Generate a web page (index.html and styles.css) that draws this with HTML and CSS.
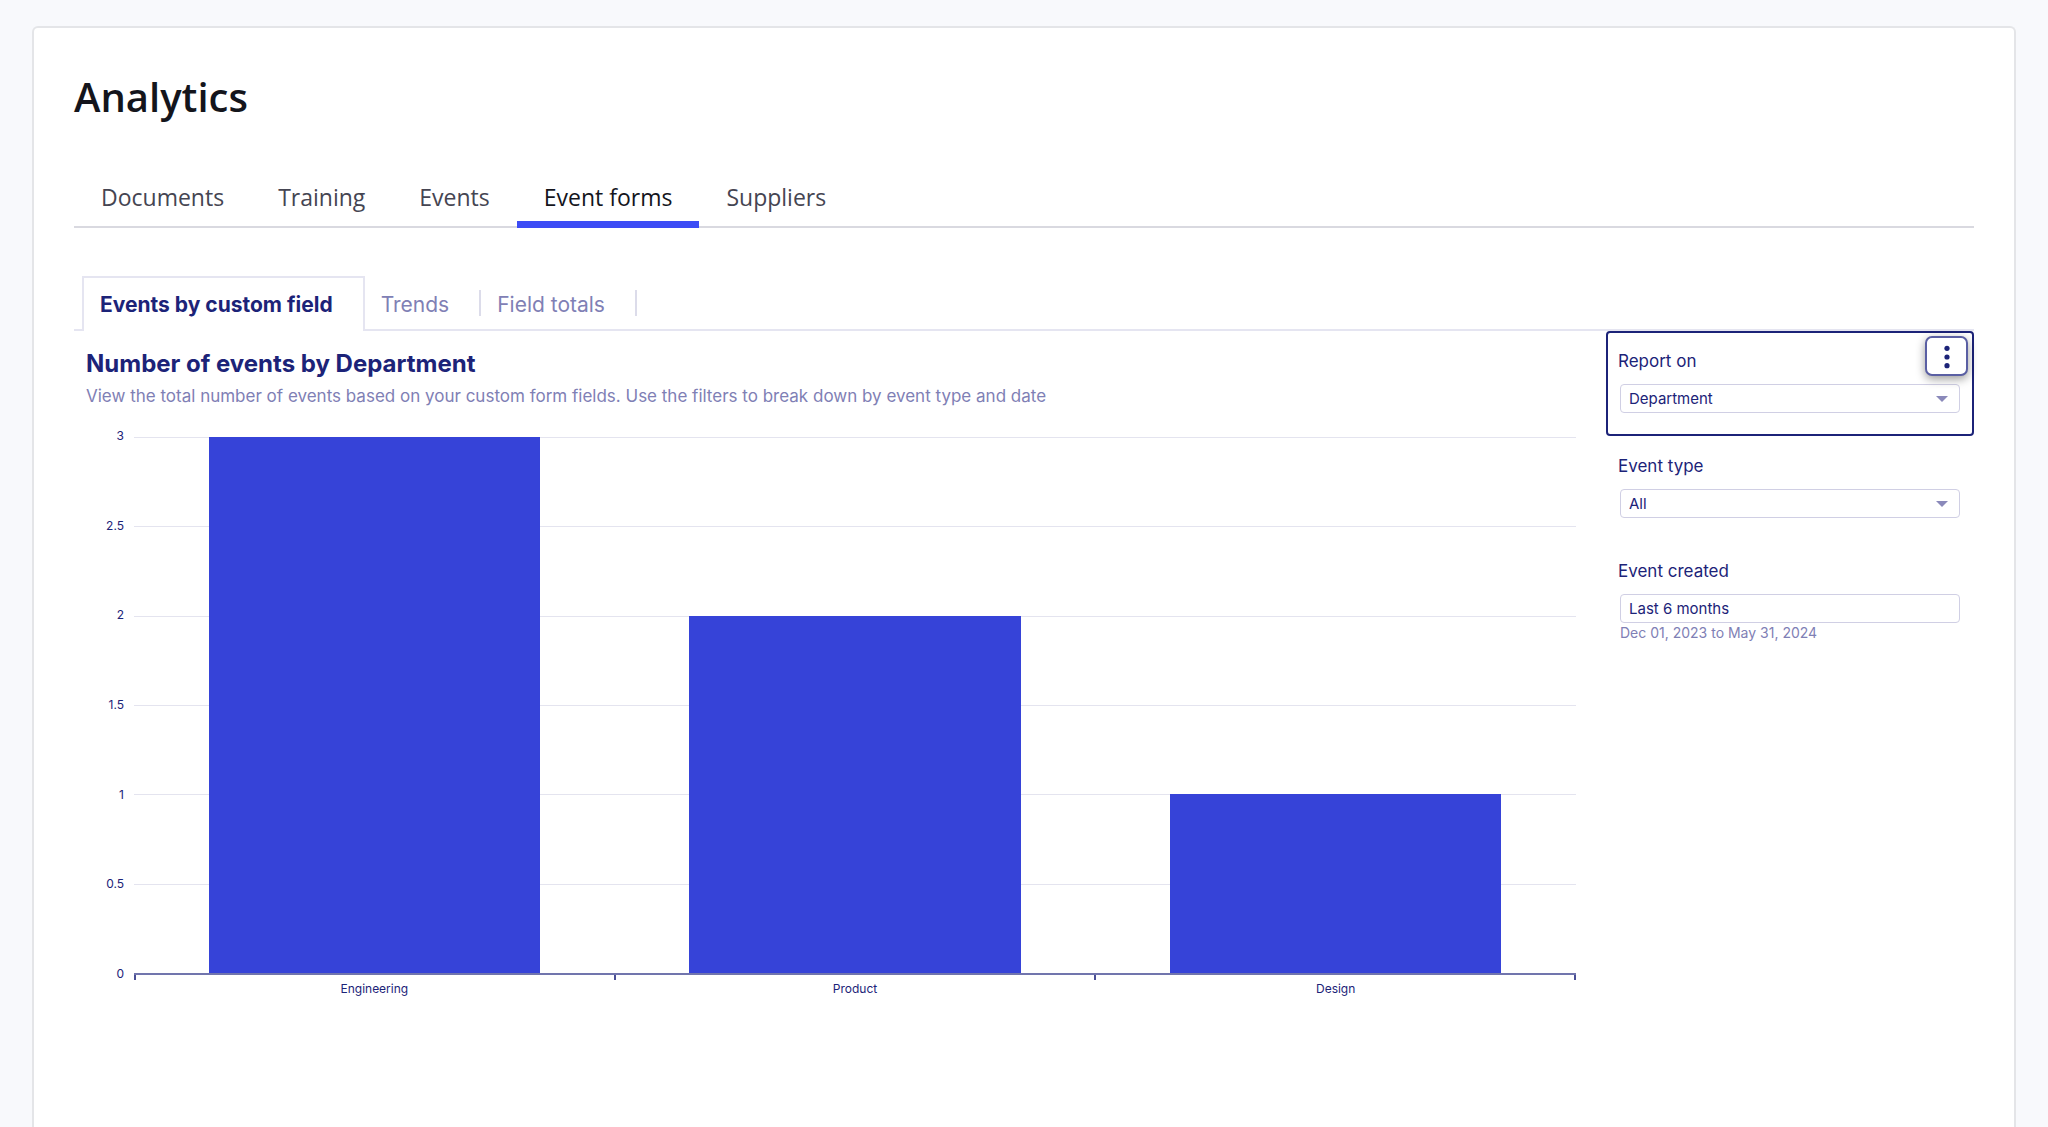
FILE: index.html
```html
<!DOCTYPE html>
<html lang="en">
<head>
<meta charset="utf-8">
<meta name="viewport" content="width=device-width, initial-scale=1">
<title>Analytics</title>
<link rel="stylesheet" href="styles.css">
</head>
<body>
<main class="card">
  <h1 class="page-title">Analytics</h1>

  <nav class="tabs" aria-label="Analytics sections">
    <a class="tab" href="#documents">Documents</a>
    <a class="tab" href="#training">Training</a>
    <a class="tab" href="#events">Events</a>
    <a class="tab tab-active" href="#event-forms" aria-current="page">Event forms</a>
    <a class="tab" href="#suppliers">Suppliers</a>
  </nav>

  <div class="subtabs" role="tablist">
    <button class="subtab subtab-active" type="button" role="tab" aria-selected="true">Events by custom field</button>
    <button class="subtab" type="button" role="tab" aria-selected="false">Trends</button>
    <button class="subtab" type="button" role="tab" aria-selected="false">Field totals</button>
  </div>

  <div class="report">
    <section class="report-main">
      <h2 class="report-title">Number of events by Department</h2>
      <p class="report-intro">View the total number of events based on your custom form fields. Use the filters to break down by event type and date</p>

      <div class="chart">
        <div class="y-axis">
          <span>3</span><span>2.5</span><span>2</span><span>1.5</span><span>1</span><span>0.5</span><span>0</span>
        </div>
        <div class="plot">
          <div class="gridlines"><i></i><i></i><i></i><i></i><i></i><i></i></div>
          <div class="bars">
            <div class="bar" style="height:100%"></div>
            <div class="bar" style="height:66.667%"></div>
            <div class="bar" style="height:33.333%"></div>
          </div>
        </div>
        <div class="x-axis">
          <span>Engineering</span><span>Product</span><span>Design</span>
        </div>
      </div>
    </section>

    <aside class="filters">
      <div class="filter filter-selected">
        <label class="filter-label" for="report-on">Report on</label>
        <div class="field">
          <select class="control" id="report-on"><option>Department</option></select>
          <svg class="caret" viewBox="0 0 12 6" aria-hidden="true"><path d="M0 0h12L6 6z"/></svg>
        </div>
        <button class="more" type="button" aria-label="More options">
          <svg class="more-icon" viewBox="0 0 6 24" aria-hidden="true"><circle cx="3" cy="3.3" r="2.6"/><circle cx="3" cy="12" r="2.6"/><circle cx="3" cy="20.7" r="2.6"/></svg>
        </button>
      </div>
      <div class="filter">
        <label class="filter-label" for="event-type">Event type</label>
        <div class="field">
          <select class="control" id="event-type"><option>All</option></select>
          <svg class="caret" viewBox="0 0 12 6" aria-hidden="true"><path d="M0 0h12L6 6z"/></svg>
        </div>
      </div>
      <div class="filter">
        <label class="filter-label" for="event-created">Event created</label>
        <div class="field">
          <input class="control" id="event-created" type="text" value="Last 6 months">
        </div>
        <p class="filter-note">Dec 01, 2023 to May 31, 2024</p>
      </div>
    </aside>
  </div>
</main>
</body>
</html>
```
FILE: styles.css
```css
:root {
  --navy: #1c2378;
  --muted: #7f80b5;
  --rule: #e5e5f1;
  --bar: #3643d8;
}

* {
  box-sizing: border-box;
}

body {
  margin: 0;
  min-height: 100vh;
  display: flex;
  flex-direction: column;
  padding: 26px 32px 0;
  background: #f8f9fc;
  color: var(--navy);
  font-family: Inter, "Liberation Sans", sans-serif;
}

.card {
  flex: 1;
  padding: 40px;
  background: #fff;
  border: 2px solid #e4e5e8;
  border-bottom: 0;
  border-radius: 6px 6px 0 0;
}

.page-title {
  margin: 0 0 55px;
  color: #14151c;
  font: 600 40px/58px "Open Sans", sans-serif;
}

/* Section tabs */
.tabs {
  display: flex;
  box-shadow: inset 0 -2px #d9d9e0;
}

.tab {
  padding: 0 27px 8px;
  border-bottom: 7px solid transparent;
  color: #454552;
  font: 400 23px/32px "Open Sans", sans-serif;
  text-decoration: none;
}

.tab-active {
  border-bottom-color: #3c4cf5;
  color: #14151c;
}

/* Report tabs */
.subtabs {
  display: flex;
  height: 55px;
  margin-top: 48px;
  padding-left: 8px;
  box-shadow: inset 0 -2px var(--rule);
}

.subtab {
  display: flex;
  align-items: center;
  padding: 0 0 0 16px;
  background: none;
  border: 0;
  border-top: 2px solid transparent;
  color: var(--muted);
  font: 400 21px/28px Inter, sans-serif;
}

.subtab::after {
  content: "";
  width: 2px;
  height: 26px;
  margin: 0 0 4px 30px;
  background: #dcdcea;
}

.subtab-active {
  padding-right: 30px;
  background: #fff;
  border: 2px solid var(--rule);
  border-bottom: 0;
  color: var(--navy);
  font-weight: 700;
}

.subtab-active::after {
  content: none;
}

/* Report */
.report {
  display: flex;
  gap: 30px;
}

.report-main {
  flex: 1;
  min-width: 0;
  padding: 17px 0 0 12px;
}

.report-title {
  margin: 0;
  font-size: 24px;
  line-height: 32px;
  font-weight: 700;
}

.report-intro {
  margin: 4px 0 29px;
  color: var(--muted);
  font-size: 17px;
  line-height: 24px;
}

/* Bar chart */
.chart {
  display: grid;
  grid-template-columns: 48px 1fr;
  grid-template-rows: 538px auto;
  font-size: 12px;
  line-height: 14px;
}

.y-axis {
  display: flex;
  flex-direction: column;
  justify-content: space-between;
  margin: -8px 0 -6px;
  padding-right: 10px;
  text-align: right;
}

.plot {
  display: grid;
  border-bottom: 2px solid #7175ad;
}

.gridlines,
.bars {
  grid-area: 1 / 1;
  display: grid;
}

.gridlines i {
  border-top: 1px solid #e4e4ef;
}

.bars {
  grid-template-columns: repeat(3, 1fr);
  align-items: end;
  justify-items: center;
}

.bar {
  width: 69%;
  background: var(--bar);
}

.x-axis {
  grid-column: 2;
  display: grid;
  grid-template-columns: repeat(3, 1fr);
  text-align: center;
  background:
    linear-gradient(#4a4f96, #4a4f96) 0 0 / 2px 5px no-repeat,
    linear-gradient(#4a4f96, #4a4f96) 33.33% 0 / 2px 5px no-repeat,
    linear-gradient(#4a4f96, #4a4f96) 66.67% 0 / 2px 5px no-repeat,
    linear-gradient(#4a4f96, #4a4f96) 100% 0 / 2px 5px no-repeat;
}

.x-axis span {
  padding-top: 7px;
}

/* Filters */
.filters {
  width: 368px;
}

.filter {
  position: relative;
  min-height: 105px;
  padding: 16px 10px 0;
  border: 2px solid transparent;
  border-radius: 4px;
}

.filter-selected {
  border-color: var(--navy);
}

.filter-label {
  display: block;
  font-size: 17px;
  line-height: 24px;
}

.field {
  display: grid;
  align-items: center;
  margin: 11px 2px 0;
}

.control {
  grid-area: 1 / 1;
  width: 100%;
  height: 29px;
  padding: 0 8px;
  appearance: none;
  background: #fff;
  border: 1px solid #d0cfe4;
  border-radius: 4px;
  color: var(--navy);
  font: 400 15px/20px Inter, sans-serif;
}

.caret {
  grid-area: 1 / 1;
  justify-self: end;
  width: 12px;
  height: 6px;
  margin-right: 12px;
  fill: #8a89ba;
  pointer-events: none;
}

.filter-note {
  margin: 0 2px;
  color: var(--muted);
  font-size: 14px;
  line-height: 20px;
}

.more {
  position: absolute;
  top: 3px;
  right: 4px;
  display: grid;
  place-items: center;
  width: 43px;
  height: 40px;
  padding: 2px 0 0;
  background: #fff;
  border: 2px solid #5a5fa3;
  border-radius: 7px;
  box-shadow: 0 3px 10px rgba(0, 0, 0, .4);
}

.more-icon {
  width: 6px;
  height: 24px;
  fill: var(--navy);
}
```
